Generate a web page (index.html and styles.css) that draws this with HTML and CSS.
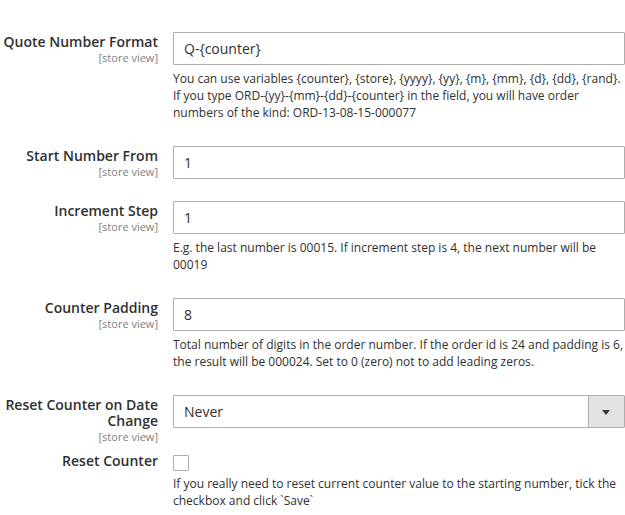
FILE: index.html
```html
<!DOCTYPE html>
<html lang="en">
<head>
    <meta charset="UTF-8">
    <meta name="viewport" content="width=device-width, initial-scale=1.0">
    <title>Quote Number Settings</title>
    <link rel="stylesheet" href="styles.css">
</head>
<body>
    <div class="fieldset">
        <div class="field">
            <div class="field-label">
                <label for="format">Quote Number Format<span class="scope">[store view]</span></label>
            </div>
            <div class="field-control">
                <input type="text" id="format" class="input-text" value="Q-{counter}">
                <p class="note">You can use variables {counter}, {store}, {yyyy}, {yy}, {m}, {mm}, {d}, {dd}, {rand}. If you type ORD-{yy}-{mm}-{dd}-{counter} in the field, you will have order numbers of the kind: ORD-13-08-15-000077</p>
            </div>
        </div>
        <div class="field">
            <div class="field-label">
                <label for="start">Start Number From<span class="scope">[store view]</span></label>
            </div>
            <div class="field-control">
                <input type="text" id="start" class="input-text" value="1">
            </div>
        </div>
        <div class="field">
            <div class="field-label">
                <label for="step">Increment Step<span class="scope">[store view]</span></label>
            </div>
            <div class="field-control">
                <input type="text" id="step" class="input-text" value="1">
                <p class="note">E.g. the last number is 00015. If increment step is 4, the next number will be 00019</p>
            </div>
        </div>
        <div class="field">
            <div class="field-label">
                <label for="padding">Counter Padding<span class="scope">[store view]</span></label>
            </div>
            <div class="field-control">
                <input type="text" id="padding" class="input-text" value="8">
                <p class="note">Total number of digits in the order number. If the order id is 24 and padding is 6, the result will be 000024. Set to 0 (zero) not to add leading zeros.</p>
            </div>
        </div>
        <div class="field">
            <div class="field-label">
                <label for="reset-date">Reset Counter on Date Change<span class="scope">[store view]</span></label>
            </div>
            <div class="field-control">
                <div class="select-wrap">
                    <select id="reset-date" class="select">
                        <option>Never</option>
                        <option>Each Day</option>
                        <option>Each Month</option>
                        <option>Each Year</option>
                    </select>
                    <span class="select-arrow"></span>
                </div>
            </div>
        </div>
        <div class="field">
            <div class="field-label">
                <label for="reset">Reset Counter</label>
            </div>
            <div class="field-control">
                <input type="checkbox" id="reset" class="checkbox">
                <p class="note">If you really need to reset current counter value to the starting number, tick the checkbox and click `Save`</p>
            </div>
        </div>
    </div>
</body>
</html>
```

FILE: styles.css
```css
body {
    margin: 0;
    font-family: "Open Sans", "Liberation Sans", sans-serif;
    color: #303030;
    background-color: #fff;
}
.fieldset {
    padding-top: 10px;
}
.field {
    display: flex;
    padding-top: 22px;
}
.field-label {
    width: 173px;
    flex-shrink: 0;
    box-sizing: border-box;
    padding-right: 15px;
    text-align: right;
}
.field-label label {
    position: relative;
    display: block;
    padding-top: 2px;
    font-size: 14px;
    font-weight: 600;
    line-height: 16px;
}
.scope {
    position: absolute;
    right: 0;
    bottom: -15px;
    font-size: 11px;
    font-weight: 400;
    line-height: 14px;
    color: #808080;
    white-space: nowrap;
}
.field-control {
    flex: 1;
    min-width: 0;
}
.input-text, .select {
    display: block;
    width: 100%;
    height: 33px;
    box-sizing: border-box;
    margin: 0;
    padding: 0 10px;
    border: 1px solid #adadad;
    border-radius: 1px;
    background-color: #fff;
    font-family: "Open Sans", "Liberation Sans", sans-serif;
    font-size: 14px;
    color: #303030;
    outline: none;
}
.note {
    margin: 5px 0 3px;
    font-size: 12px;
    line-height: 17px;
}
.select-wrap {
    position: relative;
}
.select {
    appearance: none;
    -webkit-appearance: none;
    padding-right: 45px;
}
.select-arrow {
    position: absolute;
    top: 1px;
    right: 1px;
    bottom: 1px;
    width: 35px;
    border-left: 1px solid #adadad;
    background-color: #e3e3e3;
    pointer-events: none;
}
.select-arrow:after {
    content: "";
    position: absolute;
    top: 14px;
    left: 13px;
    border-top: 5px solid #41362f;
    border-left: 4px solid transparent;
    border-right: 4px solid transparent;
}
.checkbox {
    appearance: none;
    -webkit-appearance: none;
    display: block;
    width: 16px;
    height: 16px;
    margin: 4px 0 0;
    border: 1px solid #adadad;
    border-radius: 1px;
    background-color: #fff;
}
.checkbox + .note {
    margin-top: 4px;
}
```
